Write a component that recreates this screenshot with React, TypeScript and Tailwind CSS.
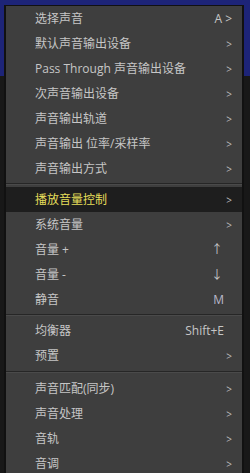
type Item = { label: string; key?: string; hot?: boolean } | number;

const items: Item[] = [
  { label: "选择声音", key: "A >" },
  { label: "默认声音输出设备", key: ">" },
  { label: "Pass Through 声音输出设备", key: ">" },
  { label: "次声音输出设备", key: ">" },
  { label: "声音输出轨道", key: ">" },
  { label: "声音输出 位率/采样率", key: ">" },
  { label: "声音输出方式", key: ">" },
  6,
  { label: "播放音量控制", key: ">", hot: true },
  { label: "系统音量", key: ">" },
  { label: "音量 +", key: "↑" },
  { label: "音量 -", key: "↓" },
  { label: "静音", key: "M" },
  6,
  { label: "均衡器", key: "Shift+E" },
  { label: "预置", key: ">" },
  8,
];

const tail: Item[] = [
  { label: "声音匹配(同步)", key: ">" },
  { label: "声音处理", key: ">" },
  { label: "音轨", key: ">" },
  { label: "音调", key: ">" },
];

function keyClass(k?: string) {
  if (k === ">") return "text-[10px] text-[#bdbdbd]";
  if (k === "M") return "text-[#b8b8c8] pr-[8px]";
  if (k === "↑" || k === "↓") return "pr-[9px]";
  if (k === "Shift+E") return "pr-[8px]";
  return "";
}

export default function App() {
  return (
    <div
      className="relative w-[250px] h-[473px] overflow-hidden bg-[#161616]"
      style={{ fontFamily: '"Open Sans", "Noto Sans CJK SC", sans-serif' }}
    >
      {/* backdrop behind the menu */}
      <div className="h-[76px] bg-[#1d2478]" />
      <div className="h-[397px] bg-[#181818]" />

      <div className="absolute left-[4px] top-[5px] w-[240px] h-[480px] bg-[#3e3e3e] border-l-2 border-r-2 border-t border-[#111]">
        {[...items, ...tail].map((it, i) =>
          typeof it === "number" ? (
            <div key={i} className={`flex flex-col justify-center ${it === 8 ? "h-[8px]" : "h-[6px]"}`}>
              <div className="h-px bg-[#262626]" />
              <div className="h-px bg-[#4a4a4a]" />
            </div>
          ) : (
            <div
              key={i}
              className={`flex items-center h-[25px] pl-[29px] pr-[10px] text-[12px] leading-none ${
                it.hot ? "bg-[#1e1e1e] text-[#e6de5a]" : "text-[#c6c6c6]"
              }`}
            >
              <span className="flex-1 whitespace-nowrap">{it.label}</span>
              <span className={keyClass(it.key)}>{it.key}</span>
            </div>
          )
        )}
      </div>
    </div>
  );
}
